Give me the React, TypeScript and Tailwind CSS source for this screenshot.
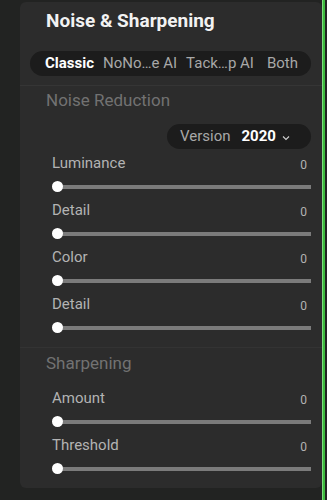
const font = { fontFamily: "Roboto, 'Noto Sans', sans-serif" };

function Slider({ label }: { label: string }) {
  return (
    <div className="pl-[32px] pr-[11px]">
      <div className="flex h-[20px] items-center justify-between">
        <span className="text-[15px] text-[#b3b3b3]">{label}</span>
        <span className="mt-[3px] pr-[4px] text-[12px] text-[#b3b3b3]">0</span>
      </div>
      <div className="relative mt-[8px] mb-[8px] h-[11px]">
        <div className="absolute left-[6px] right-0 top-[4px] h-[4px] bg-[#7b7b7b]" />
        <div className="absolute left-0 top-0 size-[11px] rounded-full bg-white" />
      </div>
    </div>
  );
}

export default function App() {
  return (
    <div className="flex h-[500px] w-[327px] bg-[#222322]" style={font}>
      <div className="w-[20px] shrink-0" />
      <div className="mt-[2px] flex h-[486px] w-[302px] shrink-0 flex-col rounded-md bg-[#2c2c2c]">
        <div className="pl-[26px] pt-[7px] text-[19px] font-bold leading-[24px] text-[#f2f2f2]">
          Noise &amp; Sharpening
        </div>
        <div className="ml-[10px] mr-[11px] mt-[18px] flex h-[25px] items-center rounded-full bg-[#1c1c1c] pl-[15px] text-[15px] text-[#a8a8a8]">
          <span className="font-bold text-white">Classic</span>
          <span className="ml-[9px]">NoNo…e AI</span>
          <span className="ml-[9px]">Tack…p AI</span>
          <span className="ml-[13px]">Both</span>
        </div>
        <div className="mt-[9px] h-px bg-[#353535]" />
        <div className="pl-[26px] pt-[4px] text-[17px] leading-[20px] text-[#727272]">Noise Reduction</div>
        <div className="mr-[11px] mt-[14px] flex justify-end">
          <div className="flex h-[25px] w-[144px] items-center rounded-full bg-[#1c1c1c] pl-[13px] text-[15px]">
            <span className="text-[#a8a8a8]">Version</span>
            <span className="ml-[11px] font-bold text-white">2020</span>
            <svg className="ml-[6px] mt-[2px]" width="8" height="6" viewBox="0 0 8 6" fill="none">
              <path d="M1 1.5l3 3 3-3" stroke="#d0d0d0" strokeWidth="1.1" />
            </svg>
          </div>
        </div>
        <div className="mt-[4px]">
          <Slider label="Luminance" />
          <Slider label="Detail" />
          <Slider label="Color" />
          <Slider label="Detail" />
        </div>
        <div className="mt-[6px] h-px bg-[#333333]" />
        <div className="pl-[26px] pt-[5px] text-[17px] leading-[20px] text-[#727272]">Sharpening</div>
        <div className="mt-[15px]">
          <Slider label="Amount" />
          <Slider label="Threshold" />
        </div>
      </div>
      <div className="w-[3px] shrink-0 bg-[#3dbb3d] shadow-[inset_1px_0_0_#7fdc7f]" />
    </div>
  );
}
